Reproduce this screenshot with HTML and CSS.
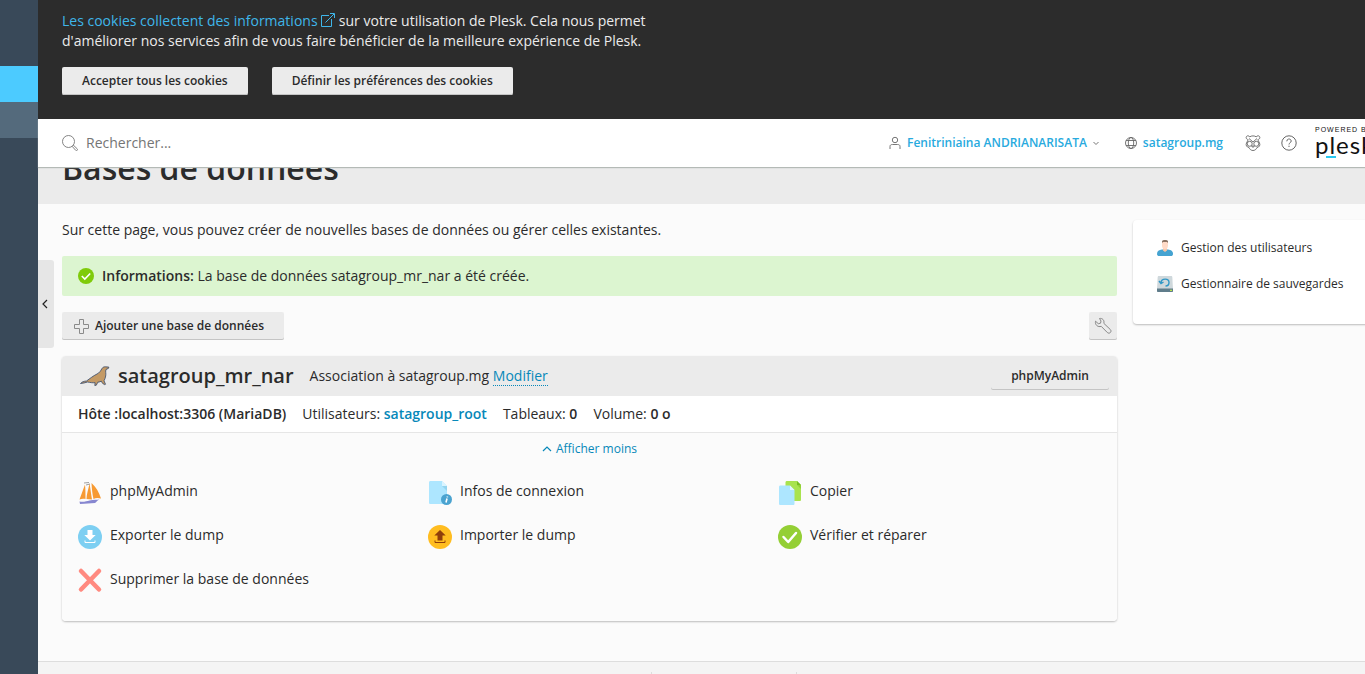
FILE: index.html
```html
<!DOCTYPE html>
<html lang="fr">
<head>
<meta charset="utf-8">
<title>Bases de données - Plesk</title>
<link rel="stylesheet" href="styles.css">
</head>
<body>
<div class="app">
  <nav class="rail" aria-label="Navigation">
    <a class="rail-item rail-item-active" href="#" aria-label="Bases de données"></a>
    <a class="rail-item rail-item-hover" href="#" aria-label="Fichiers"></a>
  </nav>
  <button class="collapse" type="button" aria-label="Replier">
    <svg width="6" height="10" viewBox="0 0 6 10" fill="none" stroke="#222" stroke-width="1.2"><path d="M5 1 1 5l4 4"/></svg>
  </button>
  <div class="page">
    <section class="cookies">
      <p class="cookies-text"><a href="#">Les cookies collectent des informations <svg width="14" height="14" viewBox="0 0 14 14" fill="none" stroke="currentColor"><path d="M8 2.5H.5v11h10V6M4.500 9.500 13 1M9 .5h4.500V5"/></svg></a> sur votre utilisation de Plesk. Cela nous permet<br>d'améliorer nos services afin de vous faire bénéficier de la meilleure expérience de Plesk.</p>
      <div class="cookies-actions">
        <button class="btn" type="button">Accepter tous les cookies</button>
        <button class="btn" type="button">Définir les préférences des cookies</button>
      </div>
    </section>

    <header class="topbar">
      <label class="search">
        <svg width="16" height="16" viewBox="0 0 16 16" fill="none" stroke="#777" stroke-width=".9"><circle cx="6.500" cy="6.500" r="6"/><path d="m10.300 11.500 1.200-1.200 3.700 3.500c1 1-.5 2.500-1.500 1.500z"/></svg>
        <input class="search-input" type="search" placeholder="Rechercher..." aria-label="Rechercher">
      </label>
      <a class="top-link" href="#">
        <svg width="12" height="14" viewBox="0 0 12 14" fill="none" stroke="#777"><circle cx="6" cy="4" r="2.700"/><path d="M1 13v-2.500C1 9 2 8.500 3.500 8.500h5C10 8.500 11 9 11 10.500V13"/></svg>
        Fenitriniaina ANDRIANARISATA
        <svg width="6" height="5" viewBox="0 0 6 5" fill="none" stroke="#777"><path d="m.5 1 2.500 2.500L5.500 1"/></svg>
      </a>
      <a class="top-link" href="#">
        <svg width="12" height="12" viewBox="0 0 12 12" fill="none" stroke="#666" stroke-width=".9"><circle cx="6" cy="6" r="5.500"/><ellipse cx="6" cy="6" rx="2.700" ry="5.500"/><path d="M1 3.500h10M1 8.500h10"/></svg>
        satagroup.mg
      </a>
      <a class="top-icon" href="#" aria-label="Conseiller">
        <svg width="16" height="18" viewBox="0 0 16 18" fill="none" stroke="#666" stroke-width=".9"><path d="M2.800 5.500C.6 5 .6 2 2.800 1.800c1 0 1.600.4 2 1C6.500 1.600 9.500 1.600 11.200 2.800c.4-.6 1-1 2-1 2.200.2 2.200 3.200 0 3.700"/><path d="M3.300 5.500 1.500 9c-1 2 .2 4.300 2.500 4.500.8 2 2.200 3 4 3s3.200-1 4-3c2.300-.2 3.500-2.500 2.500-4.500l-1.800-3.500"/><circle cx="4.700" cy="9.800" r="2.500"/><circle cx="11.300" cy="9.800" r="2.500"/><path d="m4 4.500 4 3.500 4-3.500M6.600 12h2.800L8 13.500z"/></svg>
      </a>
      <a class="top-icon" href="#" aria-label="Aide">
        <svg width="16" height="16" viewBox="0 0 16 16" fill="none" stroke="#666"><circle cx="8" cy="8" r="7.200"/><path d="M5.800 6.300c0-3 4.400-3 4.400-.2C10.200 7.700 8 7.700 8 9.500M8 10.700v1.300"/></svg>
      </a>
      <a class="logo" href="#">
        <span class="logo-small">POWERED BY</span>
        <span class="logo-name">plesk</span>
      </a>
    </header>

    <div class="title-band"><h1 class="title">Bases de données</h1></div>

    <div class="body">
      <main class="content">
        <p class="intro">Sur cette page, vous pouvez créer de nouvelles bases de données ou gérer celles existantes.</p>
        <div class="alert" role="status">
          <svg width="16" height="16" viewBox="0 0 16 16"><circle cx="8" cy="8" r="8" fill="#7fcb0a"/><path d="m3.800 8 3 3 5.400-5.500" fill="none" stroke="#fff" stroke-width="1.600"/></svg>
          <span><b>Informations:</b> La base de données satagroup_mr_nar a été créée.</span>
        </div>
        <div class="toolbar">
          <button class="btn btn-add" type="button">
            <svg width="15" height="15" viewBox="0 0 15 15" fill="none" stroke="#8a8a8a"><path d="M5.500.5h4v5h5v4h-5v5h-4v-5h-5v-4h5z"/></svg>
            Ajouter une base de données
          </button>
          <button class="btn btn-tool" type="button" aria-label="Paramètres">
            <svg width="18" height="18" viewBox="0 0 18 18" fill="none" stroke="#888"><path d="M5.500 1.500c2.700-.6 5.200 1.700 4.300 4.800l6.500 6.200c2 2-.8 5-3 3L7.200 9.300C4 10.500.8 8 1.500 4.200l2.800 2.500 2.200-.5.500-2.200z"/></svg>
          </button>
        </div>

        <section class="card">
          <header class="card-head">
            <svg class="seal" width="32" height="22" viewBox="0 0 32 22"><path d="M2.500 18.500c1.500-1.800 3.500-2.300 6-2.500C12 13.500 15 11 19 9c2.500-1.200 3.500-3 5-5.500.8-1.300 2-1.700 3.300-1.700l3.500.3-.3 1.200-2.500 1.200c-.8 2 .2 4-.3 6.500-.3 1.800-1 3.500-1.700 4.800l1.500 3.500-1.200.3c-1.500-.8-2.300-2-3-3.400-1.200.6-2.300.8-3.500 1l-1.500 3-1.500.3.300-2.800c-2.600.3-5-.2-7.500-.7-2.500.7-4.500 1.300-7.100 1.500z" fill="#c49a65" stroke="#35496b" stroke-width=".8" stroke-linejoin="round"/></svg>
            <h2 class="db-name">satagroup_mr_nar</h2>
            <span class="assoc">Association à satagroup.mg <a class="dotted" href="#">Modifier</a></span>
            <button class="btn btn-head" type="button">phpMyAdmin</button>
          </header>
          <div class="facts">
            <b>Hôte :localhost:3306 (MariaDB)</b>
            <span>Utilisateurs: <a href="#"><b>satagroup_root</b></a></span>
            <span>Tableaux: <b>0</b></span>
            <span>Volume: <b>0 o</b></span>
          </div>
          <div class="details">
            <button class="toggle" type="button">
              <svg width="10" height="6" viewBox="0 0 10 6" fill="none" stroke="currentColor" stroke-width="1.200"><path d="m1 5 4-4 4 4"/></svg>
              Afficher moins
            </button>
            <div class="tools">
              <a class="tool" href="#">
                <svg width="24" height="24" viewBox="0 0 24 24"><path d="M7 3.500 1.500 18.500c2-.8 4-.8 6-.5C7.500 13 7.500 8 7 3.500zM11.500 2.500C10.500 8 8.500 13 8.500 18l5.500.5C13 13 12.500 8 11.500 2.500zM13.500 2c.3 6 1 12 2 16 2.500-1.500 5.500-1 7.500-.5C21 11 18 6 13.500 2z" fill="#f79a32"/><path d="m6 2 5-.5M8 4l4-1" stroke="#888" stroke-width=".8"/><path d="M1.500 20.500c4 .7 7-.2 10-1 4-1.200 7-.5 10-1-2.500 1-3 2.500-4.500 3.500-5 .3-9 .5-15 1z" fill="#8787d0"/></svg>
                <span>phpMyAdmin</span></a>
              <a class="tool" href="#">
                <svg width="24" height="24" viewBox="0 0 24 24"><path d="M2.500 0H14l5 5v18H2.500C1.500 23 1 22.500 1 21.500v-20C1 .5 1.500 0 2.500 0z" fill="#ade6ff"/><path d="m14 5 5 5V5z" fill="#93d3ee"/><path d="M14 0v5h5z" fill="#d9f4ff"/><circle cx="18.500" cy="18.500" r="5.500" fill="#4aa3d0"/><path d="m19.500 15.500-.2.900m-.3 1.100-1 4" fill="none" stroke="#fff" stroke-width="1.600"/></svg>
                <span>Infos de connexion</span></a>
              <a class="tool" href="#">
                <svg width="24" height="24" viewBox="0 0 24 24"><path d="M9 0h10l4 4v14.500c0 1-.5 1.500-1.500 1.500H7.500V1.500C7.500.5 8 0 9 0z" fill="#a9e34f"/><path d="M19 0v4h4z" fill="#76bd22"/><path d="M19 4h4v4z" fill="#93d137"/><path d="M2.500 4.500H12L16.500 9v13.500c0 1-.5 1.500-1.500 1.500H2.500C1.500 24 1 23.500 1 22.500V6c0-1 .5-1.500 1.500-1.500z" fill="#ade6ff"/><path d="M12 4.500V9h4.500z" fill="#e4f7ff"/></svg>
                <span>Copier</span></a>
              <a class="tool" href="#">
                <svg width="24" height="24" viewBox="0 0 24 24"><circle cx="12" cy="12" r="12" fill="#7dcff2"/><path d="M9.500 5h5v5h3.200L12 15.500 6.300 10h3.200z" fill="#fff"/><path d="M7 15.500V17.500h10v-2" fill="none" stroke="#fff"/></svg>
                <span>Exporter le dump</span></a>
              <a class="tool" href="#">
                <svg width="24" height="24" viewBox="0 0 24 24"><circle cx="12" cy="12" r="12" fill="#ffbd20"/><path d="M9.500 15.500h5v-5h3.200L12 5l-5.700 5.500h3.200z" fill="#8f3e0b"/><path d="M7 15.500V17.500h10v-2" fill="none" stroke="#8f3e0b"/></svg>
                <span>Importer le dump</span></a>
              <a class="tool" href="#">
                <svg width="24" height="24" viewBox="0 0 24 24"><circle cx="12" cy="12" r="12" fill="#94cf35"/><path d="m5.500 12 4.700 5L18 8" fill="none" stroke="#fff" stroke-width="2.500" stroke-linecap="round" stroke-linejoin="round"/></svg>
                <span>Vérifier et réparer</span></a>
              <a class="tool" href="#">
                <svg width="24" height="24" viewBox="0 0 24 24"><path d="m3 2 18 18.500M21 2 3 20.500" stroke="#ff8a80" stroke-width="4.500" stroke-linecap="round"/></svg>
                <span>Supprimer la base de données</span></a>
            </div>
          </div>
        </section>
      </main>

      <aside class="side">
        <a class="side-link" href="#">
          <svg width="16" height="16" viewBox="0 0 16 16"><path d="M0 14c0-3 2-4 5-4.500h6c3 .5 5 1.500 5 4.500 0 1.500-1 2-2 2H2c-1 0-2-.5-2-2z" fill="#45a3d1"/><path d="M6 8h4v2.500L8 12l-2-1.500z" fill="#f6c3a5"/><path d="M5 2h6v3.500C11 8 9.500 9.500 8 9.500S5 8 5 5.500z" fill="#ffdbc8"/><path d="M5 3V1.500C5 .5 6 0 8 0s3 .5 3 1.500V3l-1-1H6z" fill="#8a7363"/></svg>
          Gestion des utilisateurs</a>
        <a class="side-link" href="#">
          <svg width="16" height="16" viewBox="0 0 16 16"><path d="M2 0h12c1 0 1.200.5 1.300 1L16 13H0L.700 1C.8.500 1 0 2 0z" fill="#cfd8dc"/><path d="M0 12.500h16V15c0 .7-.3 1-1 1H1c-.7 0-1-.3-1-1z" fill="#607d8b"/><path d="M13 14.300h2" stroke="#b7e34c" stroke-width="1.200"/><path d="M4 6.500C4.500 2 12 2 12 6.500c0 2-1.500 3.500-3.500 3.500M2 5l2 2.500L6.500 6" fill="none" stroke="#3097c6" stroke-width="1.400"/></svg>
          Gestionnaire de sauvegardes</a>
      </aside>
    </div>

    <footer class="footer"><div class="footer-cell"></div></footer>
  </div>
</div>
</body>
</html>
```

FILE: styles.css
```css
* { box-sizing: border-box; }

body {
  margin: 0;
  height: 100vh;
  overflow: hidden;
  background: #fbfbfb;
  color: #2b2b2b;
  font: 14px/20px "Open Sans", "Noto Sans", sans-serif;
}

h1, h2, p { margin: 0; }
b { font-weight: 600; }
svg { flex: none; }
a { color: #0788b9; text-decoration: none; }
button { font: inherit; cursor: pointer; }

.app {
  position: relative;
  display: flex;
  min-height: 100vh;
}

.rail {
  flex: none;
  width: 38px;
  padding-top: 66px;
  background: #394959;
}
.rail-item { display: block; height: 36px; }
.rail-item-active { background: #4ccbff; }
.rail-item-hover { background: #546a7c; }

.collapse {
  position: absolute;
  z-index: 2;
  left: 38px;
  top: 260px;
  width: 16px;
  height: 88px;
  padding: 0 6px 0 4px;
  border: 0;
  border-radius: 0 3px 3px 0;
  background: #e6e6e6;
}

/* The panel is wider than the window; the shell clips its right edge. */
.page {
  flex: none;
  display: flex;
  flex-direction: column;
  width: calc(100% - 6px);
}

.cookies {
  padding: 11px 24px 24px;
  background: #2c2c2c;
  color: #ebebeb;
}
.cookies-text a { color: #3fb6ea; }
.cookies-text svg { vertical-align: -1px; }
.cookies-actions {
  display: flex;
  gap: 24px;
  margin-top: 16px;
}

.btn {
  display: inline-flex;
  align-items: center;
  justify-content: center;
  height: 28px;
  padding: 0 20px;
  border: 0;
  border-radius: 2px;
  background: #ebebeb;
  box-shadow: inset 0 -1px #c4c4c4;
  color: #2b2b2b;
  font-size: 12px;
  font-weight: 600;
}

.topbar {
  position: relative;
  z-index: 1;
  display: flex;
  align-items: center;
  height: 48px;
  padding: 0 24px;
  background: #fff;
  box-shadow: 0 1px 1px #b4bab6;
}
.search {
  display: flex;
  align-items: center;
  gap: 8px;
  flex: 1;
}
.search-input {
  flex: 1;
  padding: 0;
  border: 0;
  outline: 0;
  background: none;
  font: inherit;
}
.search-input::placeholder { color: #757575; }
.top-link {
  display: flex;
  align-items: center;
  gap: 6px;
  margin-right: 22px;
  color: #28aade;
  font-size: 12px;
  font-weight: 600;
}
.top-link + .top-link { margin-left: 4px; }
.top-icon { display: flex; margin-right: 20px; }
.top-icon + .logo { margin-left: -2px; }
.logo {
  display: flex;
  flex-direction: column;
  width: 58px;
  color: #111;
  white-space: nowrap;
}
.logo-small {
  font: 7px/8px "Liberation Sans", sans-serif;
  letter-spacing: 1px;
}
.logo-name {
  height: 26px;
  font: 24px/22px Lato, sans-serif;
  letter-spacing: 1px;
  background: linear-gradient(#28c8f0, #28c8f0) 11px 22px / 10px 2px no-repeat;
}

.title-band {
  margin-top: -20px;
  padding-bottom: 16px;
  background: #ebebeb;
}
.title {
  padding: 0 24px;
  font-size: 32px;
  line-height: 41px;
  font-weight: 600;
}

.body {
  display: flex;
  align-items: flex-start;
  gap: 16px;
  padding: 16px 24px 40px;
}
.content {
  flex: 1;
  display: flex;
  flex-direction: column;
  gap: 16px;
}

.alert {
  display: flex;
  align-items: center;
  gap: 8px;
  padding: 10px 16px;
  border-radius: 2px;
  background: #dcf5d0;
}

.toolbar { display: flex; justify-content: space-between; }
.btn-add { gap: 6px; padding: 0 20px 0 12px; }
.btn-tool { width: 28px; padding: 0; }

.card {
  border-radius: 4px;
  background: #fff;
  box-shadow: 0 1px 2px rgba(0, 0, 0, .25);
}
.card-head {
  display: flex;
  align-items: center;
  height: 40px;
  padding: 0 8px 0 16px;
  border-radius: 4px 4px 0 0;
  background: #ebebeb;
}
.db-name {
  margin: 0 16px 0 8px;
  font-size: 20px;
  font-weight: 600;
}
.assoc { flex: 1; }
.dotted { border-bottom: 1px dotted; }
.facts {
  display: flex;
  gap: 16px;
  padding: 8px 16px;
  border-bottom: 1px solid #e6e6e6;
}
.details {
  padding: 6px 0 28px;
  border-radius: 0 0 4px 4px;
  background: #fbfbfb;
}
.toggle {
  display: flex;
  align-items: center;
  gap: 4px;
  margin: 0 auto 22px;
  padding: 0;
  border: 0;
  background: none;
  color: #0788b9;
  font-size: 12px;
}
.tools {
  display: grid;
  grid-template-columns: repeat(3, 1fr);
  gap: 20px 12px;
  padding: 0 1px 0 16px;
}
.tool {
  display: flex;
  gap: 8px;
  height: 24px;
  color: #2b2b2b;
}
.tool svg { overflow: visible; }

.side {
  flex: none;
  display: flex;
  flex-direction: column;
  gap: 16px;
  width: 240px;
  padding: 18px 24px 30px;
  border-radius: 4px;
  background: #fff;
  box-shadow: 0 1px 2px rgba(0, 0, 0, .25);
}
.side-link {
  display: flex;
  align-items: center;
  gap: 8px;
  color: #2b2b2b;
  font-size: 12px;
  white-space: nowrap;
}

.footer {
  flex: 1;
  display: flex;
  justify-content: center;
  padding: 10px 0 0 12px;
  border-top: 1px solid #ddd;
  background: #f4f4f4;
}
.footer-cell {
  width: 146px;
  border: solid #ddd;
  border-width: 0 1px;
}
```
